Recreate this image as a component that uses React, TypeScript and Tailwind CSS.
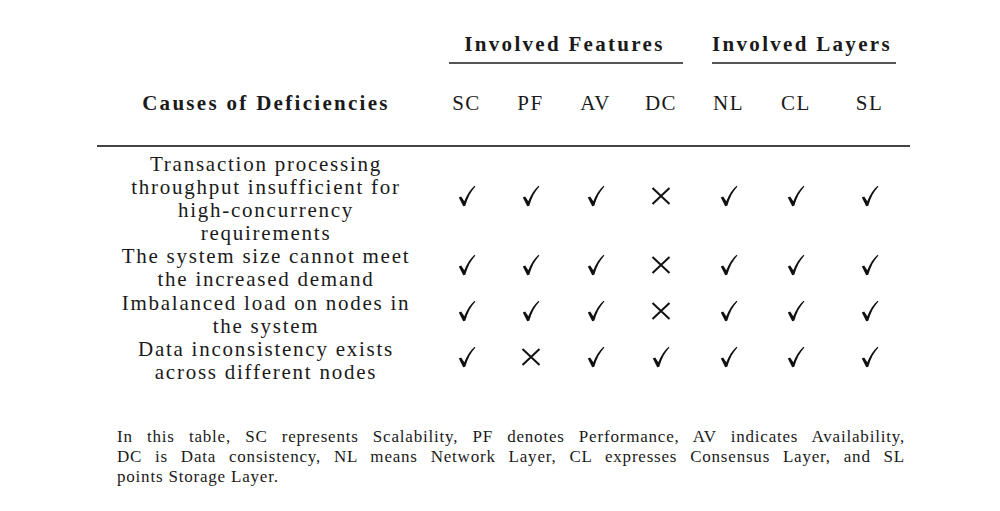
import React from "react";

const Check = () => (
  <svg width="18" height="22" viewBox="0 0 18 22" className="inline-block">
    <path
      d="M0.8 12.6 L3.2 11.4 L6.3 16.2 C9 9.5 12.5 4.5 16.6 0.8 L17.4 1.6 C13 6.5 9.6 12.5 7.3 20.8 L5.2 21.2 Z"
      fill="#111"
    />
  </svg>
);

const Cross = () => (
  <svg width="20" height="18" viewBox="0 0 20 18" className="inline-block">
    <path d="M1.5 1 L18.5 17 M18.5 1 L1.5 17" stroke="#111" strokeWidth="2" fill="none" />
  </svg>
);

const rows: { lines: string[]; marks: boolean[] }[] = [
  {
    lines: ["Transaction processing", "throughput insufficient for", "high-concurrency", "requirements"],
    marks: [true, true, true, false, true, true, true],
  },
  {
    lines: ["The system size cannot meet", "the increased demand"],
    marks: [true, true, true, false, true, true, true],
  },
  {
    lines: ["Imbalanced load on nodes in", "the system"],
    marks: [true, true, true, false, true, true, true],
  },
  {
    lines: ["Data inconsistency exists", "across different nodes"],
    marks: [true, false, true, true, true, true, true],
  },
];

const cols = ["SC", "PF", "AV", "DC", "NL", "CL", "SL"];
const grid = "grid grid-cols-[338px_63px_65px_65px_66px_69px_66px_81px]";

export default function App() {
  return (
    <div
      className="w-[1000px] h-[511px] bg-white text-[#1a1a1a] overflow-hidden"
      style={{ fontFamily: '"Liberation Serif", "DejaVu Serif", serif' }}
    >
      <div className="ml-[97px] w-[813px] pt-[32px]">
        {/* group headers */}
        <div className={grid}>
          <div />
          <div className="col-span-4 flex flex-col items-center">
            <div className="h-[24px] leading-[24px] text-[21px] font-bold tracking-[2.3px]">Involved Features</div>
          </div>
          <div className="col-span-3 flex flex-col items-center">
            <div className="h-[24px] leading-[24px] text-[21px] font-bold tracking-[2.3px]">Involved Layers</div>
          </div>
          <div />
          <div className="col-span-4 mt-[6px] ml-[14px] mr-[11px] h-[2px] bg-[#555]" />
          <div className="col-span-3 mt-[6px] ml-[18px] mr-[14px] h-[2px] bg-[#555]" />
        </div>
        {/* column headers */}
        <div className={`${grid} mt-[27px] h-[24px] leading-[24px] text-[21px]`}>
          <div className="text-center font-bold tracking-[2.3px]">Causes of Deficiencies</div>
          {cols.map((c) => (
            <div key={c} className="text-center tracking-[1.5px]">
              {c}
            </div>
          ))}
        </div>
        <div className="mt-[30px] h-[2px] bg-[#444]" />
        {/* body */}
        <div className="pt-[6px]">
          {rows.map((r, i) => (
            <div key={i} className={grid}>
              <div className="text-center text-[21px] leading-[23.1px] tracking-[1.75px]">
                {r.lines.map((l, j) => (
                  <div key={j}>{l}</div>
                ))}
              </div>
              {r.marks.map((m, j) => (
                <div key={j} className="flex items-center justify-center pb-[7px]">
                  {m ? <Check /> : <Cross />}
                </div>
              ))}
            </div>
          ))}
        </div>
      </div>
      <div className="ml-[117px] w-[788px] mt-[43px] text-[17px] leading-[20px] tracking-[0.8px]">
        <div className="text-justify [text-align-last:justify]">
          In this table, SC represents Scalability, PF denotes Performance, AV indicates Availability,
        </div>
        <div className="text-justify [text-align-last:justify]">
          DC is Data consistency, NL means Network Layer, CL expresses Consensus Layer, and SL
        </div>
        <div>points Storage Layer.</div>
      </div>
    </div>
  );
}
